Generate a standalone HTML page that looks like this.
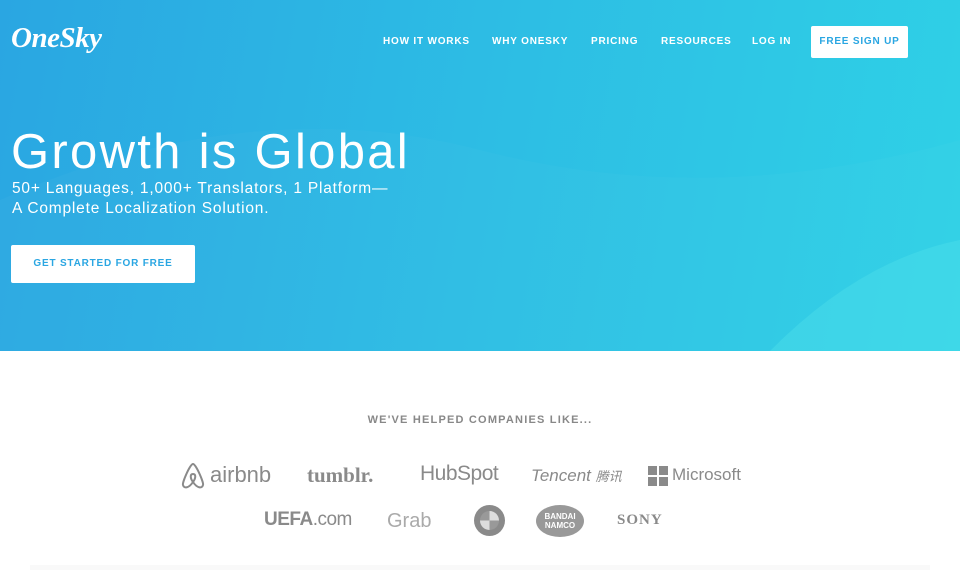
<!DOCTYPE html>
<html><head><meta charset="utf-8"><style>
*{margin:0;padding:0;box-sizing:border-box}
body{width:960px;height:570px;overflow:hidden;font-family:"Liberation Sans",sans-serif;background:#fff;position:relative}
.hero{position:absolute;left:0;top:0;width:960px;height:351px;background:linear-gradient(100deg,#2aa6e2 0%,#2dbde4 50%,#2fd1e6 100%);overflow:hidden}
.logo{position:absolute;left:11px;top:22px;color:#fff;font:italic bold 29px "Liberation Serif",serif;letter-spacing:-0.5px}
.nav a{position:absolute;top:36px;color:#fff;font-size:10px;font-weight:bold;letter-spacing:0.8px;text-decoration:none}
.btn{position:absolute;background:#fff;border-radius:2px;color:#2aa6e2;font-weight:bold;font-size:10px;letter-spacing:0.8px;text-align:center}
h1{position:absolute;left:11px;top:124px;color:#fff;font-weight:normal;font-size:49px;letter-spacing:2.3px}
.sub{position:absolute;left:12px;top:179px;color:#fff;font-size:15.5px;line-height:20px;letter-spacing:0.8px}
.tag{position:absolute;top:414px;width:960px;text-align:center;color:#888;font-weight:bold;font-size:11px;letter-spacing:1.2px}
.l{position:absolute;color:#8a8a8a}
</style></head><body>
<div class="hero">
<svg width="960" height="351" style="position:absolute;left:0;top:0">
<path d="M0 200 Q250 90 480 150 T960 140 L960 351 L0 351Z" fill="#fff" opacity="0.025"/>
<path d="M770 351 Q860 260 960 240 L960 351Z" fill="#4fe0ea" opacity="0.4"/>
</svg>
<div class="logo">OneSky</div>
<div class="nav">
<a style="left:383px">HOW IT WORKS</a>
<a style="left:492px">WHY ONESKY</a>
<a style="left:591px">PRICING</a>
<a style="left:661px">RESOURCES</a>
<a style="left:752px">LOG IN</a>
</div>
<div class="btn" style="left:811px;top:26px;width:97px;height:32px;line-height:32px">FREE SIGN UP</div>
<h1>Growth is Global</h1>
<div class="sub">50+ Languages, 1,000+ Translators, 1 Platform—<br>A Complete Localization Solution.</div>
<div class="btn" style="left:11px;top:245px;width:184px;height:38px;line-height:38px">GET STARTED FOR FREE</div>
</div>
<div class="tag">WE'VE HELPED COMPANIES LIKE...</div>
<svg class="l" style="left:178px;top:461px" width="30" height="30" viewBox="0 0 30 30"><path d="M15 3 C12 3 4 22 5 24 C6 28 11 27 15 21 C19 27 24 28 25 24 C26 22 18 3 15 3Z M15 21 C12 17 12 13 15 13 C18 13 18 17 15 21Z" fill="none" stroke="#8a8a8a" stroke-width="2"/></svg>
<div class="l" style="left:210px;top:462px;font-size:22px">airbnb</div>
<div class="l" style="left:307px;top:463px;font-size:21px;font-weight:bold;font-family:'Liberation Serif',serif">tumblr.</div>
<div class="l" style="left:420px;top:462px;font-size:21px;letter-spacing:-0.5px">HubSpot</div>
<div class="l" style="left:531px;top:466px;font-size:17px;font-style:italic">Tencent <span style="font-family:'Noto Sans CJK SC';font-size:13px">腾讯</span></div>
<div class="l" style="left:648px;top:466px;width:20px;height:20px;background:linear-gradient(#fff,#fff) 9px 0/2px 20px no-repeat,linear-gradient(#fff,#fff) 0 9px/20px 2px no-repeat,#8a8a8a"></div>
<div class="l" style="left:672px;top:465px;font-size:17px">Microsoft</div>
<div class="l" style="left:264px;top:509px;font-size:19px;letter-spacing:-0.5px"><b>UEFA</b>.com</div>
<div class="l" style="left:387px;top:510px;font-size:20px;color:#aaa">Grab</div>
<div class="l" style="left:474px;top:505px;width:31px;height:31px;border-radius:50%;background:#8a8a8a"><div style="margin:6px;width:19px;height:19px;border-radius:50%;background:conic-gradient(#ddd 0 25%,#999 0 50%,#ddd 0 75%,#999 0)"></div></div>
<div class="l" style="left:536px;top:505px;width:48px;height:32px;border-radius:50%;background:#999;color:#fff;font-size:8px;font-weight:bold;text-align:center;line-height:9px;padding-top:7px">BANDAI<br>NAMCO</div>
<div class="l" style="left:617px;top:512px;font-size:15px;font-weight:bold;font-family:'Liberation Serif',serif;letter-spacing:1px">SONY</div>
<div style="position:absolute;left:30px;top:565px;width:900px;height:5px;background:#f9f9f9"></div>
</body></html>
